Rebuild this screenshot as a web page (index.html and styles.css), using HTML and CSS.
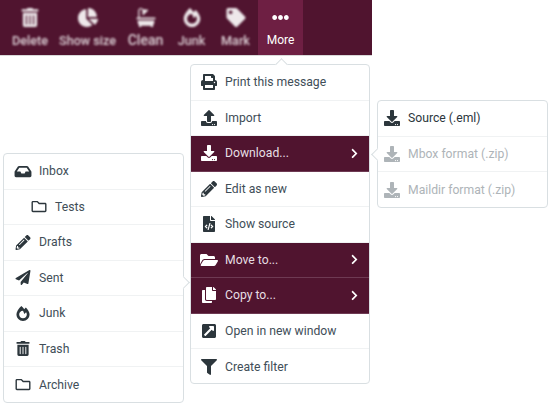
FILE: index.html
```html
<!DOCTYPE html>
<html lang="en">

<head>
    <meta charset="UTF-8">
    <meta name="viewport" content="width=device-width, initial-scale=1.0">
    <title>Mail toolbar</title>
    <link rel="stylesheet" href="styles.css">
</head>

<body>
    <svg class="iconDefs" aria-hidden="true">
        <symbol id="i-trash" viewBox="0 0 448 512"><path d="M32 464a48 48 0 0 0 48 48h288a48 48 0 0 0 48-48V128H32zm272-256a16 16 0 0 1 32 0v224a16 16 0 0 1-32 0zm-96 0a16 16 0 0 1 32 0v224a16 16 0 0 1-32 0zm-96 0a16 16 0 0 1 32 0v224a16 16 0 0 1-32 0zM432 32H312l-9.4-18.7A24 24 0 0 0 281.1 0H166.8a23.72 23.72 0 0 0-21.4 13.3L136 32H16A16 16 0 0 0 0 48v32a16 16 0 0 0 16 16h416a16 16 0 0 0 16-16V48a16 16 0 0 0-16-16z"/></symbol>
        <symbol id="i-pie" viewBox="0 0 544 512"><path d="M527.79 288H290.5l158.03 158.03c6.04 6.04 15.98 6.53 22.19.68 38.7-36.46 65.32-85.61 73.13-140.86 1.34-9.46-6.51-17.85-16.06-17.85zm-15.83-64.8C503.72 103.74 408.26 8.28 288.8.04 279.68-.59 272 7.1 272 16.24V240h223.77c9.14 0 16.82-7.68 16.19-16.8zM224 288V50.71c0-9.55-8.39-17.4-17.84-16.06C86.99 51.49-4.1 155.6.14 280.37 4.5 408.51 114.83 513.59 243.03 511.98c50.4-.63 96.97-16.87 135.26-44.03 7.9-5.6 8.42-17.23 1.57-24.08L224 288z"/></symbol>
        <symbol id="i-bath" viewBox="0 0 512 512"><path d="M32 384a95.4 95.4 0 0 0 32 71.09V496a16 16 0 0 0 16 16h32a16 16 0 0 0 16-16v-16h256v16a16 16 0 0 0 16 16h32a16 16 0 0 0 16-16v-40.91A95.4 95.4 0 0 0 480 384v-48H32zM496 256H80V69.25a37.25 37.25 0 0 1 63.6-26.35L164 63.3a68.43 68.43 0 0 0 8.2 76.1l-11.7 11.7a16 16 0 0 0 0 22.6l11.3 11.3a16 16 0 0 0 22.6 0L306.3 73.1a16 16 0 0 0 0-22.6L295 39.2a16 16 0 0 0-22.6 0l-11.7 11.7a68.5 68.5 0 0 0-76.1-8.2L164.3 22.4A69.25 69.25 0 0 0 46 69.25V256H16a16 16 0 0 0-16 16v16a16 16 0 0 0 16 16h480a16 16 0 0 0 16-16v-16a16 16 0 0 0-16-16z"/></symbol>
        <symbol id="i-fire" viewBox="0 0 448 512"><path fill-rule="evenodd" d="M323.56 51.2c-20.8 19.3-39.58 39.59-56.22 59.97C240.08 73.62 206.28 35.53 168 0 69.74 91.17 0 209.96 0 281.6 0 408.85 100.29 512 224 512s224-103.15 224-230.4c0-53.27-51.98-163.14-124.44-230.4zM224 160c-80 0-130 60-130 130c0 75 55 130 130 130s130-55 130-130c0-30-10-55-25-75l-60 60c-10-30-25-70-45-115z"/></symbol>
        <symbol id="i-tag" viewBox="0 0 512 512"><path d="M0 252.118V48C0 21.49 21.49 0 48 0h204.118a48 48 0 0 1 33.941 14.059l211.882 211.882c18.745 18.745 18.745 49.137 0 67.882L293.823 497.941c-18.745 18.745-49.137 18.745-67.882 0L14.059 286.059A48 48 0 0 1 0 252.118zM112 64c-26.51 0-48 21.49-48 48s21.49 48 48 48 48-21.49 48-48-21.49-48-48-48z"/></symbol>
        <symbol id="i-dots" viewBox="0 0 512 512"><path d="M328 256c0 39.8-32.2 72-72 72s-72-32.2-72-72 32.2-72 72-72 72 32.2 72 72zm104-72c-39.8 0-72 32.2-72 72s32.2 72 72 72 72-32.2 72-72-32.2-72-72-72zm-352 0c-39.8 0-72 32.2-72 72s32.2 72 72 72 72-32.2 72-72-32.2-72-72-72z"/></symbol>
        <symbol id="i-print" viewBox="0 0 512 512"><path d="M448 192V77.25c0-8.49-3.37-16.62-9.37-22.63L393.37 9.37c-6-6-14.14-9.37-22.63-9.37H96C78.33 0 64 14.33 64 32v160c-35.35 0-64 28.65-64 64v112c0 8.84 7.16 16 16 16h48v96c0 17.67 14.33 32 32 32h320c17.67 0 32-14.33 32-32v-96h48c8.84 0 16-7.16 16-16V256c0-35.35-28.65-64-64-64zm-64 256H128v-96h256v96zm0-224H128V64h192v48c0 8.84 7.16 16 16 16h48v96zm48 72c-13.25 0-24-10.75-24-24 0-13.26 10.75-24 24-24s24 10.74 24 24c0 13.25-10.75 24-24 24z"/></symbol>
        <symbol id="i-upload" viewBox="0 0 512 512"><path d="M296 384h-80c-13.3 0-24-10.7-24-24V192h-87.7c-17.8 0-26.7-21.5-14.1-34.1L242.3 5.7c7.5-7.5 19.8-7.5 27.3 0l152.2 152.2c12.6 12.6 3.7 34.1-14.1 34.1H320v168c0 13.3-10.7 24-24 24zm216-8v112c0 13.3-10.7 24-24 24H24c-13.3 0-24-10.7-24-24V376c0-13.3 10.7-24 24-24h136v8c0 30.9 25.1 56 56 56h80c30.9 0 56-25.1 56-56v-8h136c13.3 0 24 10.7 24 24zm-124 88c0-11-9-20-20-20s-20 9-20 20 9 20 20 20 20-9 20-20zm64 0c0-11-9-20-20-20s-20 9-20 20 9 20 20 20 20-9 20-20z"/></symbol>
        <symbol id="i-download" viewBox="0 0 512 512"><path d="M216 0h80c13.3 0 24 10.7 24 24v168h87.7c17.8 0 26.7 21.5 14.1 34.1L269.7 378.3c-7.5 7.5-19.8 7.5-27.3 0L90.1 226.1c-12.6-12.6-3.7-34.1 14.1-34.1H192V24c0-13.3 10.7-24 24-24zm296 376v112c0 13.3-10.7 24-24 24H24c-13.3 0-24-10.7-24-24V376c0-13.3 10.7-24 24-24h146.7l49 49c20.1 20.1 52.5 20.1 72.6 0l49-49H488c13.3 0 24 10.7 24 24zm-124 88c0-11-9-20-20-20s-20 9-20 20 9 20 20 20 20-9 20-20zm64 0c0-11-9-20-20-20s-20 9-20 20 9 20 20 20 20-9 20-20z"/></symbol>
        <symbol id="i-pencil" viewBox="0 0 512 512"><path d="M497.9 142.1l-46.1 46.1c-4.7 4.7-12.3 4.7-17 0l-111-111c-4.7-4.7-4.7-12.3 0-17l46.1-46.1c18.7-18.7 49.1-18.7 67.9 0l60.1 60.1c18.8 18.7 18.8 49.1 0 67.9zM284.2 99.8L21.6 362.4.4 483.9c-2.9 16.4 11.4 30.6 27.8 27.8l121.5-21.3 262.6-262.6c4.7-4.7 4.7-12.3 0-17l-111-111c-4.8-4.7-12.4-4.7-17.1 0zM124.1 339.9c-5.5-5.5-5.5-14.3 0-19.8l154-154c5.5-5.5 14.3-5.5 19.8 0s5.5 14.3 0 19.8l-154 154c-5.5 5.5-14.3 5.5-19.8 0zM88 424h48v36.3l-64.5 11.3-31.1-31.1L51.7 376H88v48z"/></symbol>
        <symbol id="i-code" viewBox="0 0 384 512"><path d="M384 121.941V128H256V0h6.059c6.365 0 12.47 2.529 16.971 7.029l97.941 97.941A24.005 24.005 0 0 1 384 121.941zM248 160c-13.2 0-24-10.8-24-24V0H24C10.745 0 0 10.745 0 24v464c0 13.255 10.745 24 24 24h336c13.255 0 24-10.745 24-24V160H248zM123.206 400.505a5.4 5.4 0 0 1-7.633.246l-64.866-60.812a5.4 5.4 0 0 1 0-7.879l64.866-60.812a5.4 5.4 0 0 1 7.633.246l19.579 20.885a5.4 5.4 0 0 1-.372 7.747L101.65 336l40.763 35.874a5.4 5.4 0 0 1 .372 7.747l-19.579 20.884zm51.295 50.479l-27.453-7.97a5.402 5.402 0 0 1-3.681-6.692l61.44-211.626a5.402 5.402 0 0 1 6.692-3.681l27.452 7.97a5.4 5.4 0 0 1 3.68 6.692l-61.44 211.626a5.397 5.397 0 0 1-6.69 3.681zm160.792-111.045l-64.866 60.812a5.4 5.4 0 0 1-7.633-.246l-19.58-20.885a5.4 5.4 0 0 1 .372-7.747L284.35 336l-40.763-35.874a5.4 5.4 0 0 1-.372-7.747l19.58-20.885a5.4 5.4 0 0 1 7.633-.246l64.866 60.812a5.4 5.4 0 0 1-.001 7.879z"/></symbol>
        <symbol id="i-open" viewBox="0 0 576 512"><path d="M572.694 292.093L500.27 416.248A63.997 63.997 0 0 1 444.989 448H45.025c-18.523 0-30.064-20.093-20.731-36.093l72.424-124.155A64 64 0 0 1 152 256h399.964c18.523 0 30.064 20.093 20.73 36.093zM152 224h328v-48c0-26.51-21.49-48-48-48H272l-64-64H48C21.49 64 0 85.49 0 112v278.046l69.077-118.418C86.214 242.25 117.989 224 152 224z"/></symbol>
        <symbol id="i-copy" viewBox="0 0 448 512"><path d="M320 448v40c0 13.255-10.745 24-24 24H24c-13.255 0-24-10.745-24-24V120c0-13.255 10.745-24 24-24h72v296c0 30.879 25.121 56 56 56h168zm0-344V0H152c-13.255 0-24 10.745-24 24v368c0 13.255 10.745 24 24 24h272c13.255 0 24-10.745 24-24V128H344c-13.2 0-24-10.8-24-24zm120.971-31.029L375.029 7.029A24 24 0 0 0 358.059 0H352v96h96v-6.059a24 24 0 0 0-7.029-16.97z"/></symbol>
        <symbol id="i-external" viewBox="0 0 448 512"><path d="M448 80v352c0 26.51-21.49 48-48 48H48c-26.51 0-48-21.49-48-48V80c0-26.51 21.49-48 48-48h352c26.51 0 48 21.49 48 48zm-88 16H248.029c-21.313 0-32.08 25.861-16.971 40.971l31.984 31.987L67.515 364.485c-4.686 4.686-4.686 12.284 0 16.971l31.029 31.029c4.687 4.686 12.285 4.686 16.971 0l195.526-195.526 31.988 31.991C357.058 263.977 384 253.425 384 231.979V120c0-13.255-10.745-24-24-24z"/></symbol>
        <symbol id="i-filter" viewBox="0 0 512 512"><path d="M487.976 0H24.028C2.71 0-8.047 25.866 7.058 40.971L192 225.941V432c0 7.831 3.821 15.17 10.237 19.662l80 55.98C298.02 518.69 320 507.493 320 487.98V225.941l184.947-184.97C520.021 25.896 509.338 0 487.976 0z"/></symbol>
        <symbol id="i-inbox" viewBox="0 0 576 512"><path d="M567.938 243.908L462.25 85.374A48.003 48.003 0 0 0 422.311 64H153.689a48 48 0 0 0-39.938 21.374L8.062 243.908A47.994 47.994 0 0 0 0 270.533V400c0 26.51 21.49 48 48 48h480c26.51 0 48-21.49 48-48V270.533a47.994 47.994 0 0 0-8.062-26.625zM162.252 128h251.497l85.333 128H376l-32 64H232l-32-64H76.918l85.334-128z"/></symbol>
        <symbol id="i-folder" viewBox="0 0 512 512"><path d="M464 128H272l-54.63-54.63c-6-6-14.14-9.37-22.63-9.37H48C21.49 64 0 85.49 0 112v288c0 26.51 21.49 48 48 48h416c26.51 0 48-21.49 48-48V176c0-26.51-21.49-48-48-48zm0 272H48V112h140.12l54.63 54.63c6 6 14.14 9.37 22.63 9.37H464v224z"/></symbol>
        <symbol id="i-plane" viewBox="0 0 512 512"><path d="M476 3.2L12.5 270.6c-18.1 10.4-15.8 35.6 2.2 43.2L121 358.4l287.3-253.2c5.5-4.9 13.3 2.6 8.6 8.3L176 407v80.5c0 23.6 28.5 32.9 42.5 15.8L282 426l124.6 52.2c14.2 6 30.4-2.9 33-18.2l72-432C515 7.8 493.3-6.8 476 3.2z"/></symbol>
        <symbol id="i-chevron" viewBox="0 0 320 512"><path d="M285.476 272.971L91.132 467.314c-9.373 9.373-24.569 9.373-33.941 0l-22.667-22.667c-9.357-9.357-9.375-24.522-.04-33.901L188.505 256 34.484 101.255c-9.335-9.379-9.317-24.544.04-33.901l22.667-22.667c9.373-9.373 24.569-9.373 33.941 0L285.475 239.03c9.373 9.372 9.373 24.568.001 33.941z"/></symbol>
    </svg>

    <div class="toolbar">
        <a class="tool dim toolDelete"><svg class="toolIcon"><use href="#i-trash"/></svg><span>Delete</span></a>
        <a class="tool dim toolSize"><svg class="toolIcon"><use href="#i-pie"/></svg><span>Show size</span></a>
        <a class="tool dim toolClean"><svg class="toolIcon"><use href="#i-bath"/></svg><span>Clean</span></a>
        <a class="tool dim toolJunk"><svg class="toolIcon"><use href="#i-fire"/></svg><span>Junk</span></a>
        <a class="tool dim toolMark"><svg class="toolIcon"><use href="#i-tag"/></svg><span>Mark</span></a>
        <a class="tool active"><svg class="toolIcon"><use href="#i-dots"/></svg><span>More</span></a>
    </div>

    <ul class="popup folders">
        <li><svg class="icon"><use href="#i-inbox"/></svg>Inbox</li>
        <li class="nested"><svg class="icon"><use href="#i-folder"/></svg>Tests</li>
        <li><svg class="icon"><use href="#i-pencil"/></svg>Drafts</li>
        <li><svg class="icon"><use href="#i-plane"/></svg>Sent</li>
        <li><svg class="icon"><use href="#i-fire"/></svg>Junk</li>
        <li><svg class="icon"><use href="#i-trash"/></svg>Trash</li>
        <li><svg class="icon"><use href="#i-folder"/></svg>Archive</li>
    </ul>

    <ul class="popup moreMenu">
        <li><svg class="icon"><use href="#i-print"/></svg>Print this message</li>
        <li><svg class="icon"><use href="#i-upload"/></svg>Import</li>
        <li class="selected"><svg class="icon"><use href="#i-download"/></svg>Download...<svg class="chevron"><use href="#i-chevron"/></svg></li>
        <li><svg class="icon"><use href="#i-pencil"/></svg>Edit as new</li>
        <li><svg class="icon"><use href="#i-code"/></svg>Show source</li>
        <li class="selected"><svg class="icon"><use href="#i-open"/></svg>Move to...<svg class="chevron"><use href="#i-chevron"/></svg></li>
        <li class="selected"><svg class="icon"><use href="#i-copy"/></svg>Copy to...<svg class="chevron"><use href="#i-chevron"/></svg></li>
        <li><svg class="icon"><use href="#i-external"/></svg>Open in new window</li>
        <li><svg class="icon"><use href="#i-filter"/></svg>Create filter</li>
    </ul>

    <ul class="popup downloads">
        <li class="source"><svg class="icon"><use href="#i-download"/></svg>Source (.eml)</li>
        <li class="disabled"><svg class="icon"><use href="#i-download"/></svg>Mbox format (.zip)</li>
        <li class="disabled"><svg class="icon"><use href="#i-download"/></svg>Maildir format (.zip)</li>
    </ul>
</body>
</html>
```

FILE: styles.css
```css
* {
    box-sizing: border-box;
}

body {
    margin: 0;
    width: 550px;
    height: 405px;
    overflow: hidden;
    position: relative;
    background-color: white;
    font-family: Roboto, "Liberation Sans", sans-serif;
    font-size: 12.2px;
    color: #414e58;
}

.iconDefs {
    display: none;
}

svg {
    fill: currentColor;
}

.toolbar {
    width: 372px;
    height: 56px;
    display: flex;
    padding-left: 6px;
    background-color: #50142f;
    border-bottom: 1px solid #d8d8d8;
}

.tool {
    display: flex;
    flex-direction: column;
    align-items: center;
    padding-top: 8px;
    color: white;
    font-size: 12px;
    white-space: nowrap;
}

.tool span {
    margin-top: 6px;
}

.tool.dim {
    filter: blur(0.8px);
    font-size: 12.6px;
    font-weight: 500;
}

.dim .toolIcon {
    opacity: 0.9;
}

.dim span {
    opacity: 0.8;
}

.toolDelete {
    width: 48px;
}

.toolSize {
    width: 67px;
}

.toolClean {
    width: 49px;
}

.tool.toolClean {
    font-size: 14px;
}

.toolClean span {
    margin-top: 5px;
}

.toolJunk {
    width: 43px;
}

.toolMark {
    width: 45px;
}

.tool.active {
    width: 45px;
    background-color: #6e1f43;
}

.toolIcon {
    width: 20px;
    height: 19px;
}

.active .toolIcon {
    width: 17px;
}

.popup {
    position: absolute;
    margin: 0;
    padding: 0;
    list-style: none;
    background-color: white;
    border: 1px solid #d9dfe2;
    border-radius: 4px;
}

.popup::before {
    content: "";
    position: absolute;
    width: 8px;
    height: 8px;
    background-color: white;
    border: 1px solid #d9dfe2;
    transform: rotate(45deg);
}

.popup li {
    height: 35.5px;
    display: flex;
    align-items: center;
    padding-left: 9px;
    border-bottom: 1px solid #f0f2f3;
    position: relative;
}

.popup li:last-child {
    border-bottom: 0;
}

/* icons sit centred in a fixed box so the labels line up */
.icon {
    width: 18px;
    height: 16px;
    margin-right: 7px;
    color: #2c363c;
    flex-shrink: 0;
}

.folders {
    left: 3px;
    top: 153px;
    width: 181px;
    height: 250px;
}

.folders::before {
    right: -5px;
    top: 124px;
    border-width: 1px 1px 0 0;
}

.folders li {
    padding-left: 10px;
}

.folders .icon {
    height: 15px;
}

.folders .nested {
    padding-left: 26px;
}

.moreMenu {
    left: 190px;
    top: 64px;
    width: 180px;
    height: 320px;
}

.moreMenu::before {
    left: 86px;
    top: -5px;
    border-width: 1px 0 0 1px;
}

.moreMenu .selected {
    background-color: #50142f;
    color: #e6dfe3;
    border-bottom-color: #6e3a53;
}

.moreMenu .selected .icon,
.chevron {
    color: white;
}

.chevron {
    width: 9px;
    height: 11px;
    position: absolute;
    right: 10px;
}

.downloads {
    left: 377px;
    top: 100px;
    width: 171px;
    height: 108px;
}

.downloads::before {
    left: -5px;
    top: 49px;
    border-width: 0 0 1px 1px;
}

.downloads li {
    padding-left: 5px;
}

.downloads .source {
    color: #2c363c;
}

.downloads .disabled,
.downloads .disabled .icon {
    color: #aeb4b8;
}
```
